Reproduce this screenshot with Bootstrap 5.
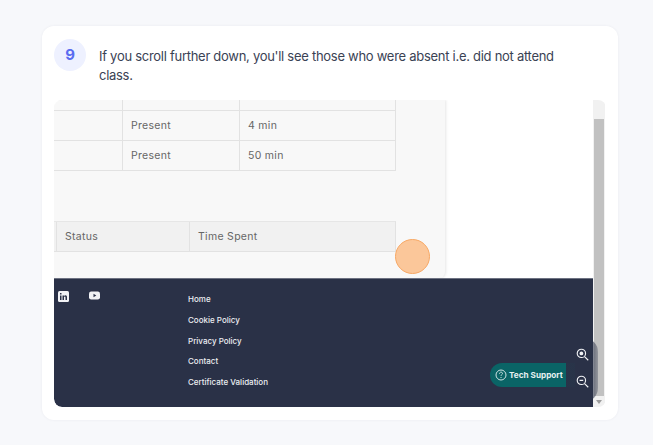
<!DOCTYPE html>
<html lang="en">
<head>
    <meta charset="UTF-8">
    <meta name="viewport" content="width=device-width, initial-scale=1.0">
    <title>Step 9</title>
    <link href="https://cdn.jsdelivr.net/npm/bootstrap@5.3.3/dist/css/bootstrap.min.css" rel="stylesheet">
    <style>
        html, body { height: 100%; }
        body {
            background: #f7f8fb;
            font-family: "Inter", "Liberation Sans", sans-serif;
            overflow: hidden;
        }
        .step-card {
            margin: 26px 35px 0 42px;
            height: 394px;
            padding: 13px 12px 13px 12px;
            background: #fff;
            border-radius: 12px;
            box-shadow: 0 0 3px rgba(30, 40, 70, .06);
        }
        .step-num {
            width: 32px;
            height: 32px;
            flex: none;
            background: #eef1ff;
            color: #5a6cf0;
            font-size: 15px;
            font-weight: 700;
        }
        .step-text {
            width: 470px;
            margin: 8px 0 0 13px;
            color: #3a4254;
            font-size: 13px;
            letter-spacing: -.28px;
            line-height: 19px;
        }
        .shot {
            position: relative;
            height: 307px;
            margin-top: 15px;
            border-radius: 8px;
            overflow: hidden;
        }
        .shot-main { width: 539px; }
        .shot-top { height: 178px; }
        .panel {
            width: 391px;
            background: #f8f8f8;
            border-radius: 0 0 6px 0;
            box-shadow: 1px 0 3px rgba(0, 0, 0, .1);
            font-size: 10.5px;
            letter-spacing: .3px;
            color: #666;
        }
        .grid-row {
            display: flex;
            width: 342px;
            border-bottom: 1px solid #e2e2e2;
            border-right: 1px solid #e2e2e2;
        }
        .grid-row > div {
            padding-left: 8px;
            border-left: 1px solid #e2e2e2;
            line-height: 29px;
        }
        .row-stub { height: 11px; }
        .c-1 { width: 68px; border-left: 0 !important; }
        .c-2 { width: 117px; }
        .c-3 { flex: 1; }
        .head-row {
            margin-top: 50px;
            background: #f1f1f1;
            border-top: 1px solid #e6e6e6;
        }
        .head-row > div { line-height: 29px; }
        .c-a { width: 2px; padding: 0 !important; border-left: 0 !important; }
        .c-b { width: 133px; }
        .site-footer {
            height: 129px;
            background: #2a3147;
            border-top: 1px solid #6d7282;
            border-radius: 0 0 0 8px;
            color: #eceef2;
        }
        .social { width: 134px; padding: 12px 0 0 4px; gap: 20px; }
        .foot-links {
            padding-top: 10px;
            font-size: 8px;
            font-weight: 500;
            line-height: 20.75px;
        }
        .shot-bar {
            width: 12px;
            background: #f1f1f1;
        }
        .bar-thumb {
            height: 277px;
            margin: 19px 1px 4px 1px;
            background: #c1c1c1;
        }
        .bar-arrow {
            width: 0;
            height: 0;
            margin: 0 auto;
            border-left: 3px solid transparent;
            border-right: 3px solid transparent;
            border-top: 4px solid #9c9c9c;
        }
        .click-dot {
            position: absolute;
            left: 341px;
            top: 139px;
            width: 35px;
            height: 35px;
            border-radius: 50%;
            background: #fbc79a;
            border: 1px solid #f7a865;
        }
        .tech-btn {
            position: absolute;
            left: 436px;
            top: 263px;
            width: 85px;
            height: 24px;
            padding-left: 5px;
            gap: 2px;
            border-radius: 12px 0 0 12px;
            background: #0a6466;
            color: #e6f1f1;
            font-size: 8.2px;
            font-weight: 700;
            white-space: nowrap;
        }
        .zoom-box {
            position: absolute;
            left: 512px;
            top: 238px;
            width: 32px;
            height: 64px;
            padding-top: 10px;
            gap: 14px;
            border-radius: 14px;
            background: linear-gradient(to right, rgba(42, 49, 71, .95) 65%, rgba(42, 49, 71, .3));
        }
    </style>
</head>
<body>
    <div class="step-card">
        <div class="d-flex">
            <div class="step-num rounded-circle d-flex align-items-center justify-content-center">9</div>
            <p class="step-text mb-0">If you scroll further down, you'll see those who were absent i.e. did not attend class.</p>
        </div>
        <div class="shot d-flex">
            <div class="shot-main d-flex flex-column">
                <div class="shot-top d-flex bg-white">
                    <div class="panel">
                        <div class="grid-row row-stub">
                            <div class="c-1"></div><div class="c-2"></div><div class="c-3"></div>
                        </div>
                        <div class="grid-row">
                            <div class="c-1"></div><div class="c-2">Present</div><div class="c-3">4 min</div>
                        </div>
                        <div class="grid-row">
                            <div class="c-1"></div><div class="c-2">Present</div><div class="c-3">50 min</div>
                        </div>
                        <div class="grid-row head-row">
                            <div class="c-a"></div><div class="c-b">Status</div><div class="c-3">Time Spent</div>
                        </div>
                    </div>
                </div>
                <div class="site-footer d-flex">
                    <div class="social d-flex align-items-start">
                        <svg width="11" height="11" viewBox="0 0 11 11">
                            <rect width="11" height="11" rx="1.5" fill="#f1f2f5"/>
                            <path d="M2 4.4h1.5V9H2zM2 2h1.5v1.4H2zM4.5 4.4H6V5c.4-.5.9-.7 1.4-.7C8.500 4.300 9 5 9 6.200V9H7.500V6.500c0-.6-.2-1-.7-1s-.8.4-.8 1V9H4.500z" fill="#2a3147"/>
                        </svg>
                        <svg width="11" height="9" viewBox="0 0 11 9">
                            <rect width="11" height="8" y=".5" rx="2.200" fill="#f1f2f5"/>
                            <path d="M4.500 2.800v3.400L7.300 4.500z" fill="#2a3147"/>
                        </svg>
                    </div>
                    <div class="foot-links">
                        <div>Home</div>
                        <div>Cookie Policy</div>
                        <div>Privacy Policy</div>
                        <div>Contact</div>
                        <div>Certificate Validation</div>
                    </div>
                </div>
            </div>
            <div class="shot-bar">
                <div class="bar-thumb"></div>
                <div class="bar-arrow"></div>
            </div>
            <div class="click-dot"></div>
            <div class="tech-btn d-flex align-items-center">
                <svg width="12" height="12" viewBox="0 0 12 12" fill="none" stroke="#cfe3e3">
                    <circle cx="6" cy="6" r="5"/>
                    <path d="M4.500 4.700c0-2 3-2 3-.2 0 1.100-1.500 1.200-1.500 2.300M6 8v1"/>
                </svg>
                Tech Support
            </div>
            <div class="zoom-box d-flex flex-column align-items-center">
                <svg width="13" height="13" viewBox="0 0 14 14" fill="none" stroke="#f1f2f5" stroke-width="1.200">
                    <circle cx="5.800" cy="5.800" r="4.500"/>
                    <circle cx="5.800" cy="5.800" r="2" fill="#f1f2f5" stroke="none"/>
                    <path d="M9.200 9.200l4 4"/>
                </svg>
                <svg width="13" height="13" viewBox="0 0 14 14" fill="none" stroke="#f1f2f5" stroke-width="1.200">
                    <circle cx="5.800" cy="5.800" r="4.500"/>
                    <path d="M9.200 9.200l4 4M3.800 5.800h4"/>
                </svg>
            </div>
        </div>
    </div>
    <script src="https://cdn.jsdelivr.net/npm/bootstrap@5.3.3/dist/js/bootstrap.bundle.min.js"></script>
</body>
</html>
